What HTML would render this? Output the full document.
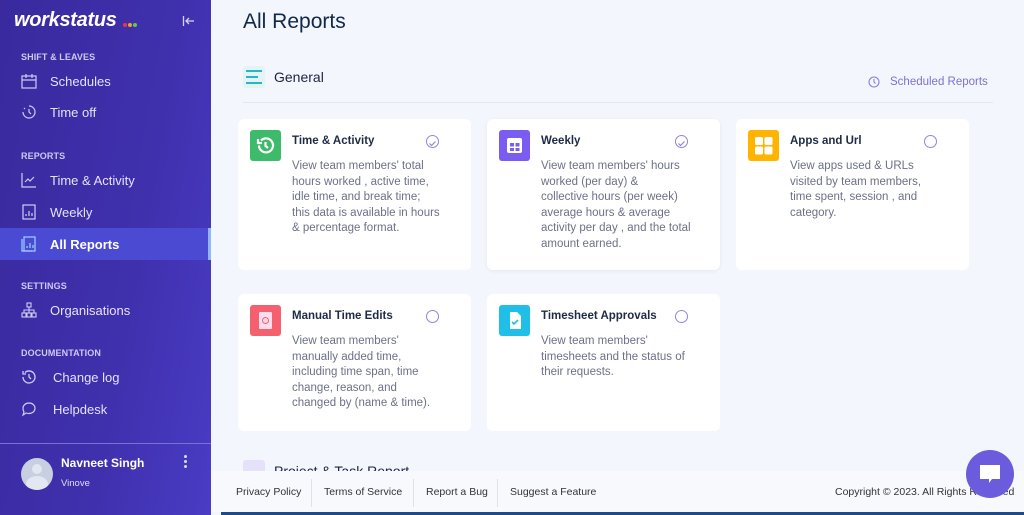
<!DOCTYPE html>
<html><head><meta charset="utf-8"><style>
*{margin:0;padding:0;box-sizing:border-box}
html,body{width:1024px;height:515px;overflow:hidden}
body{font-family:"Liberation Sans",sans-serif;background:#f3f6fd;position:relative}
.sb{position:absolute;left:0;top:0;width:211px;height:515px;background:linear-gradient(100deg,#3a2a9e 0%,#3f30ad 60%,#4a3cc4 100%);color:#fff}
.logo{position:absolute;left:14px;top:9px;font-size:20px;font-style:italic;font-weight:bold;letter-spacing:-0.3px}
.dots{position:absolute;left:123px;top:23px;line-height:0;font-size:0}
.dots i{display:inline-block;width:4px;height:4px;border-radius:50%;margin-right:1px}
.sec{position:absolute;left:21px;font-size:9px;font-weight:bold;color:#cfc8f2;letter-spacing:.1px}
.it{position:absolute;left:0;width:211px;height:30px;display:flex;align-items:center;font-size:13px;color:#e6e2fb}
.it svg{position:absolute;left:21px}
.it span{position:absolute;left:50px}
.act{background:#4a4bd2;color:#fff;font-weight:bold;border-right:3px solid #8fb6ff}
.main{position:absolute;left:211px;top:0;width:813px;height:515px;overflow:hidden}
h1{position:absolute;left:32px;top:10px;font-size:21px;font-weight:normal;color:#10294a}
.card{position:absolute;background:#fff;border-radius:6px;width:233px}
.ic{position:absolute;left:12px;top:11px;width:31px;height:31px;border-radius:3px}
.tt{position:absolute;left:54px;top:16px;font-size:11.5px;font-weight:bold;color:#1f2a44}
.ds{position:absolute;left:54px;top:40px;width:148px;font-size:11.5px;line-height:15.5px;color:#6b7187}
.ck{position:absolute;left:188px;top:16px;width:13px;height:13px;border-radius:50%;border:1.2px solid #8f86d8}
.foot{position:absolute;left:0;top:471px;width:813px;height:41px;background:#f7f9fd;font-size:10.5px;color:#333}
.foot span{position:absolute;top:15px}
.vl{position:absolute;top:8px;width:1px;height:28px;background:#dde1ea}
</style></head><body>
<div class="sb">
<div class="logo">workstatus</div>
<div class="dots"><i style="background:#e53a3a"></i><i style="background:#f0a030"></i><i style="background:#6cc44a"></i></div>
<svg style="position:absolute;left:182px;top:15px" width="13" height="12" viewBox="0 0 13 12" fill="none" stroke="#d8d4f5" stroke-width="1.3"><path d="M1.5 1v10M12 6H4M7 3L4 6l3 3"/></svg>
<div class="sec" style="top:52px">SHIFT &amp; LEAVES</div>
<div class="it" style="top:66px"><svg width="16" height="16" viewBox="0 0 16 16" fill="none" stroke="#d0cbf3" stroke-width="1.2"><rect x="1" y="3" width="14" height="12"/><path d="M1 7h14M5 1v4M11 1v4"/></svg><span>Schedules</span></div>
<div class="it" style="top:97px"><svg width="16" height="16" viewBox="0 0 16 16" fill="none" stroke="#d0cbf3" stroke-width="1.2"><path d="M8 2a6 6 0 1 1-6 6M8 5v3l2 2M3 4l1 1"/></svg><span>Time off</span></div>
<div class="sec" style="top:151px">REPORTS</div>
<div class="it" style="top:165px"><svg width="16" height="16" viewBox="0 0 16 16" fill="none" stroke="#d0cbf3" stroke-width="1.2"><path d="M1 1v14h14M4 10l3-3 2 2 4-4"/></svg><span>Time &amp; Activity</span></div>
<div class="it" style="top:197px"><svg width="16" height="16" viewBox="0 0 16 16" fill="none" stroke="#d0cbf3" stroke-width="1.2"><rect x="2" y="1" width="12" height="14"/><path d="M5 12v-2M8 12V7M11 12V9"/></svg><span>Weekly</span></div>
<div class="it act" style="top:228px;height:32px"><svg width="16" height="16" viewBox="0 0 16 16" fill="none" stroke="#9fd0ff" stroke-width="1.2"><rect x="3" y="1" width="11" height="14"/><path d="M1 3v12h10M6 12v-2M9 12V7M12 12V9"/></svg><span>All Reports</span></div>
<div class="sec" style="top:281px">SETTINGS</div>
<div class="it" style="top:295px"><svg width="16" height="16" viewBox="0 0 16 16" fill="none" stroke="#d0cbf3" stroke-width="1.1"><rect x="6" y="1" width="4" height="4"/><rect x="1" y="11" width="4" height="4"/><rect x="6" y="11" width="4" height="4"/><rect x="11" y="11" width="4" height="4"/><path d="M8 5v6M3 11V8h10v3"/></svg><span>Organisations</span></div>
<div class="sec" style="top:348px">DOCUMENTATION</div>
<div class="it" style="top:362px"><svg width="16" height="16" viewBox="0 0 16 16" fill="none" stroke="#d0cbf3" stroke-width="1.3"><path d="M2 8a6 6 0 1 0 2-4.5M2 2v3h3M8 5v3l2 2"/></svg><span style="left:53px">Change log</span></div>
<div class="it" style="top:394px"><svg width="16" height="16" viewBox="0 0 16 16" fill="none" stroke="#d0cbf3" stroke-width="1.2"><path d="M8 2c3.5 0 6 2.3 6 5.2S11.5 12.5 8 12.5c-1 0-2-.2-2.8-.5L2 14l1-3C2.3 10 2 9 2 7.2 2 4.3 4.5 2 8 2z"/></svg><span style="left:53px">Helpdesk</span></div>
<div style="position:absolute;left:0;top:443px;width:211px;height:1px;background:#7a70d8"></div>
<div style="position:absolute;left:21px;top:458px;width:32px;height:32px;border-radius:50%;background:#c8cfe0;overflow:hidden"><div style="position:absolute;left:11px;top:6px;width:10px;height:10px;border-radius:50%;background:#e2e7f2"></div><div style="position:absolute;left:5px;top:18px;width:22px;height:16px;border-radius:50%;background:#e2e7f2"></div></div>
<div style="position:absolute;left:61px;top:456px;font-size:12px;font-weight:bold">Navneet Singh</div>
<div style="position:absolute;left:61px;top:478px;font-size:9.5px;color:#e0dcf8">Vinove</div>
<div style="position:absolute;left:184px;top:455px;width:3px;font-size:0"><i style="display:block;width:3px;height:3px;border-radius:50%;background:#ddd;margin-bottom:2px"></i><i style="display:block;width:3px;height:3px;border-radius:50%;background:#ddd;margin-bottom:2px"></i><i style="display:block;width:3px;height:3px;border-radius:50%;background:#ddd"></i></div>
</div>
<div class="main">
<h1>All Reports</h1>
<div style="position:absolute;left:32px;top:66px;width:22px;height:22px;background:#e3f3f6;border-radius:3px"></div>
<svg style="position:absolute;left:34px;top:69px" width="18" height="16" viewBox="0 0 18 16" stroke="#22b8c4" stroke-width="2"><path d="M1 2h16M1 8h12M1 14h16"/></svg>
<div style="position:absolute;left:63px;top:69px;font-size:14px;color:#1a2540">General</div>
<svg style="position:absolute;left:657px;top:76px" width="12" height="12" viewBox="0 0 12 12" fill="none" stroke="#8a80d8" stroke-width="1.1"><circle cx="6" cy="6" r="5"/><path d="M6 3v3l1.5 1.5"/></svg>
<div style="position:absolute;left:679px;top:76px;font-size:11.5px;color:#7b72d2">Scheduled Reports</div>
<div style="position:absolute;left:32px;top:102px;width:750px;height:1px;background:#e3e6ee"></div>

<div class="card" style="left:27px;top:119px;height:151px"><div class="ic" style="background:#3dba6a"><svg width="31" height="31" viewBox="0 0 31 31" fill="none" stroke="#fff" stroke-width="2.2"><path d="M9 15.5a7 7 0 1 0 2-5M8 9v4h4M15.5 12v4l2.5 2"/></svg></div><div class="tt">Time &amp; Activity</div><div class="ck"><svg width="11" height="11" viewBox="0 0 11 11" fill="none" stroke="#8f86d8" stroke-width="1.2"><path d="M2.5 5.5l2 2 4-4"/></svg></div><div class="ds">View team members' total hours worked , active time, idle time, and break time; this data is available in hours &amp; percentage format.</div></div>
<div class="card" style="left:276px;top:119px;height:151px;box-shadow:0 1px 4px rgba(0,0,0,.06)"><div class="ic" style="background:#7b5cf0"><svg width="31" height="31" viewBox="0 0 31 31" fill="#fff"><rect x="8" y="8" width="15" height="15" rx="2"/><rect x="11" y="13" width="4" height="3.5" fill="#7b5cf0"/><rect x="16.5" y="13" width="4" height="3.5" fill="#7b5cf0"/><rect x="11" y="18" width="4" height="3" fill="#7b5cf0"/><rect x="16.5" y="18" width="4" height="3" fill="#7b5cf0"/></svg></div><div class="tt">Weekly</div><div class="ck"><svg width="11" height="11" viewBox="0 0 11 11" fill="none" stroke="#8f86d8" stroke-width="1.2"><path d="M2.5 5.5l2 2 4-4"/></svg></div><div class="ds" style="width:152px">View team members' hours worked (per day) &amp;<br>collective hours (per week) average hours &amp; average activity per day , and the total amount earned.</div></div>
<div class="card" style="left:525px;top:119px;height:151px"><div class="ic" style="background:#ffb400"><svg width="31" height="31" viewBox="0 0 31 31" fill="#fff"><rect x="7" y="7" width="8" height="8" rx="1.5"/><rect x="16.5" y="7" width="8" height="8" rx="1.5"/><rect x="7" y="16.5" width="8" height="8" rx="1.5"/><rect x="16.5" y="16.5" width="8" height="8" rx="1.5"/></svg></div><div class="tt">Apps and Url</div><div class="ck"></div><div class="ds" style="width:140px">View apps used &amp; URLs visited by team members, time spent, session , and category.</div></div>

<div class="card" style="left:27px;top:294px;height:137px"><div class="ic" style="background:#f5606e"><svg width="31" height="31" viewBox="0 0 31 31"><rect x="9" y="7" width="13" height="17" rx="1" fill="#fde"/><circle cx="15.5" cy="15.5" r="3" fill="none" stroke="#f5606e" stroke-width="1"/></svg></div><div class="tt">Manual Time Edits</div><div class="ck"></div><div class="ds" style="width:140px">View team members' manually added time, including time span, time change, reason, and changed by (name &amp; time).</div></div>
<div class="card" style="left:276px;top:294px;height:137px"><div class="ic" style="background:#1fbfe8"><svg width="31" height="31" viewBox="0 0 31 31"><path d="M11 7h7l4 4v13H11z" fill="#fff"/><path d="M13 17l2 2 4-4" fill="none" stroke="#1fbfe8" stroke-width="1.6"/></svg></div><div class="tt">Timesheet Approvals</div><div class="ck"></div><div class="ds" style="width:145px">View team members' timesheets and the status of their requests.</div></div>

<div style="position:absolute;left:32px;top:460px;width:22px;height:12px;background:#e6e1fa;border-radius:3px 3px 0 0"></div>
<div style="position:absolute;left:63px;top:462px;font-size:14px;color:#1a2540;height:9px;overflow:hidden;line-height:18px">Project &amp; Task Report</div>

<div class="foot">
<span style="left:25px">Privacy Policy</span><div class="vl" style="left:100px"></div>
<span style="left:113px">Terms of Service</span><div class="vl" style="left:202px"></div>
<span style="left:215px">Report a Bug</span><div class="vl" style="left:286px"></div>
<span style="left:299px">Suggest a Feature</span>
<span style="left:624px">Copyright © 2023. All Rights Reserved</span>
</div>
<div style="position:absolute;left:10px;top:512px;width:803px;height:3px;background:#1e4a8a"></div>
<div style="position:absolute;left:755px;top:450px;width:48px;height:48px;border-radius:50%;background:#6a5cdc"><svg style="position:absolute;left:13px;top:14px" width="22" height="22" viewBox="0 0 22 22"><path d="M1 1h20v14H13l-3 4v-4H1z" fill="#fff"/></svg></div>
</div>
</body></html>
